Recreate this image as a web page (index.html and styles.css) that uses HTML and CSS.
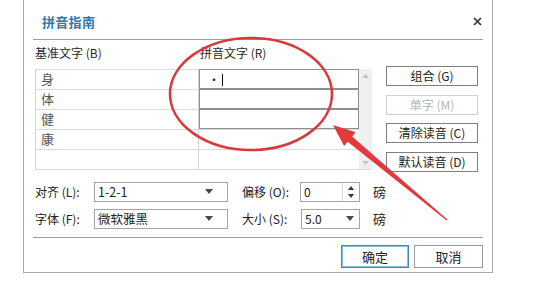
FILE: index.html
```html
<!DOCTYPE html>
<html lang="zh">
<head>
<meta charset="utf-8">
<title>拼音指南</title>
<link rel="stylesheet" href="styles.css">
</head>
<body>
<div class="dialog">
  <div class="titlebar">
    <span class="title">拼音指南</span>
    <svg class="close" width="9" height="9" viewBox="0 0 9 9"><path d="M1 1 L8 8 M8 1 L1 8" stroke="#333" stroke-width="1.7" fill="none"/></svg>
  </div>
  <div class="sep"></div>
  <div class="main">
    <div class="grid-area">
      <div class="heads">
        <span class="h-base">基准文字 (B)</span>
        <span class="h-py">拼音文字 (R)</span>
      </div>
      <div class="table">
        <div class="cell base">身</div>
        <div class="cell py edit"><span class="dot">·</span><span class="caret"></span></div>
        <div class="scroll">
          <svg width="7" height="4" viewBox="0 0 7 4"><path d="M0 4 L3.5 0 L7 4 Z" fill="#c4c4c4"/></svg>
          <svg width="7" height="4" viewBox="0 0 7 4"><path d="M0 0 L3.5 4 L7 0 Z" fill="#c4c4c4"/></svg>
        </div>
        <div class="cell base">体</div>
        <div class="cell py edit"></div>
        <div class="cell base">健</div>
        <div class="cell py edit"></div>
        <div class="cell base">康</div>
        <div class="cell py"></div>
        <div class="cell base last"></div>
        <div class="cell py last"></div>
      </div>
    </div>
    <div class="side">
      <div class="btn">组合 (G)</div>
      <div class="btn disabled">单字 (M)</div>
      <div class="btn">清除读音 (C)</div>
      <div class="btn">默认读音 (D)</div>
    </div>
  </div>
  <div class="form">
    <span class="lbl">对齐 (L):</span>
    <div class="select wide"><span>1-2-1</span><span class="tri"></span></div>
    <span class="lbl lbl2">偏移 (O):</span>
    <div class="spin"><span>0</span><span class="spinbtn"><span class="up"></span><span class="down"></span></span></div>
    <span class="unit">磅</span>
    <span class="lbl">字体 (F):</span>
    <div class="select wide"><span>微软雅黑</span><span class="tri"></span></div>
    <span class="lbl lbl2">大小 (S):</span>
    <div class="select small"><span>5.0</span><span class="tri"></span></div>
    <span class="unit">磅</span>
  </div>
  <div class="sep sep2"></div>
  <div class="footer">
    <div class="fbtn default">确定</div>
    <div class="fbtn">取消</div>
  </div>
</div>
<svg class="annot" width="558" height="289" viewBox="0 0 558 289">
  <ellipse cx="251" cy="94" rx="81" ry="56" fill="none" stroke="#d8393d" stroke-width="2.6"/>
  <polygon points="333,125 355.7,132.2 352.1,136.4 447.4,219.5 446.6,220.5 347.7,141.8 344.1,146" fill="#e5383b"/>
</svg>
</body>
</html>
```

FILE: styles.css
```css
* { box-sizing: border-box; }
html, body { margin: 0; padding: 0; background: #fff; }
body {
  width: 558px;
  height: 289px;
  overflow: hidden;
  position: relative;
  font-family: "Noto Sans CJK SC", "Microsoft YaHei", sans-serif;
  font-size: 12px;
  color: #2a2a2a;
}
.dialog {
  margin-left: 23px;
  width: 470px;
  height: 273px;
  border: 1px solid #a9a9a9;
  border-top: none;
  background: #fff;
  display: flex;
  flex-direction: column;
}
.titlebar {
  height: 39px;
  padding: 4px 10px 0 18px;
  display: flex;
  align-items: center;
  justify-content: space-between;
}
.title {
  font-size: 13px;
  font-weight: bold;
  color: #2d7bb6;
  letter-spacing: 0.3px;
}
.close { display: block; margin-top: -1px; }
.sep {
  height: 1px;
  background: #9d9d9d;
  margin: 0 9px;
  flex: none;
}
.main {
  display: flex;
  align-items: flex-start;
  padding-left: 11px;
}
.heads {
  height: 29px;
  display: flex;
  padding-top: 5px;
  line-height: 16px;
}
.h-base { width: 165px; }
.table {
  display: grid;
  grid-template-columns: 164px 160px 13px;
  grid-template-rows: repeat(5, 20px);
  border-bottom: 1px solid #dadada;
}
.cell {
  height: 20px;
  border-top: 1px solid #dadada;
  line-height: 18px;
  font-size: 13px;
}
.base {
  grid-column: 1;
  border-left: 1px solid #d4d4d4;
  border-right: 1px solid #d4d4d4;
  padding-left: 5px;
  color: #555;
}
.py {
  grid-column: 2;
  padding-left: 9px;
  display: flex;
  align-items: center;
}
.edit {
  outline: 1px solid #8f8f8f;
  outline-offset: -1px;
  border-top-color: #8f8f8f;
}
.dot { font-size: 12px; color: #222; margin-right: 2px; }
.caret { width: 1px; height: 12px; background: #111; display: inline-block; }
.scroll {
  grid-column: 3;
  grid-row: 1 / 6;
  background: #f0f0f0;
  display: flex;
  flex-direction: column;
  align-items: center;
  justify-content: space-between;
  padding: 5px 0 4px;
}
.scroll svg { display: block; }
.side {
  margin-left: 14px;
  padding-top: 26px;
  display: flex;
  flex-direction: column;
  gap: 8.5px;
}
.btn {
  width: 92px;
  height: 20px;
  border: 1px solid #7e7e7e;
  text-align: center;
  line-height: 18px;
  color: #222;
}
.btn.disabled {
  border-color: #d3d3d3;
  color: #b5b5b5;
}
.form {
  margin-top: 10px;
  padding-left: 11px;
  display: grid;
  grid-template-columns: 59px 134px 72px 60px 30px;
  grid-template-rows: 20px 20px;
  row-gap: 7px;
  align-items: center;
}
.lbl { white-space: nowrap; color: #222; }
.lbl2 { padding-left: 14px; }
.unit { padding-left: 13px; color: #222; font-size: 13px; }
.select, .spin {
  height: 20px;
  border: 1px solid #a5a5a5;
  display: flex;
  align-items: center;
  justify-content: space-between;
  padding-left: 3px;
  color: #222;
}
.select.wide { padding-right: 14px; font-size: 12.5px; }
.select.small { padding-right: 5px; margin-left: 1px; }
.tri {
  width: 0; height: 0;
  border-left: 4.5px solid transparent;
  border-right: 4.5px solid transparent;
  border-top: 5px solid #4a4a4a;
}
.spin { padding-right: 0; }
.spinbtn {
  width: 17px;
  height: 100%;
  border-left: 1px solid #d8d8d8;
  display: flex;
  flex-direction: column;
  align-items: center;
  justify-content: center;
  gap: 4px;
}
.up {
  width: 0; height: 0;
  border-left: 3px solid transparent;
  border-right: 3px solid transparent;
  border-bottom: 4px solid #333;
}
.down {
  width: 0; height: 0;
  border-left: 3px solid transparent;
  border-right: 3px solid transparent;
  border-top: 4px solid #333;
}
.sep2 { margin-top: 8px; }
.footer {
  display: flex;
  justify-content: flex-end;
  gap: 5px;
  padding: 7px 9px 0 0;
}
.fbtn {
  width: 69px;
  height: 23px;
  border: 1px solid #9a9a9a;
  text-align: center;
  line-height: 21px;
  font-size: 13px;
  color: #222;
}
.fbtn.default {
  width: 68px;
  border-color: #3b8bc3;
  box-shadow: inset 0 0 0 1px #86bde2;
}
.annot {
  position: absolute;
  left: 0;
  top: 0;
  pointer-events: none;
}
```
